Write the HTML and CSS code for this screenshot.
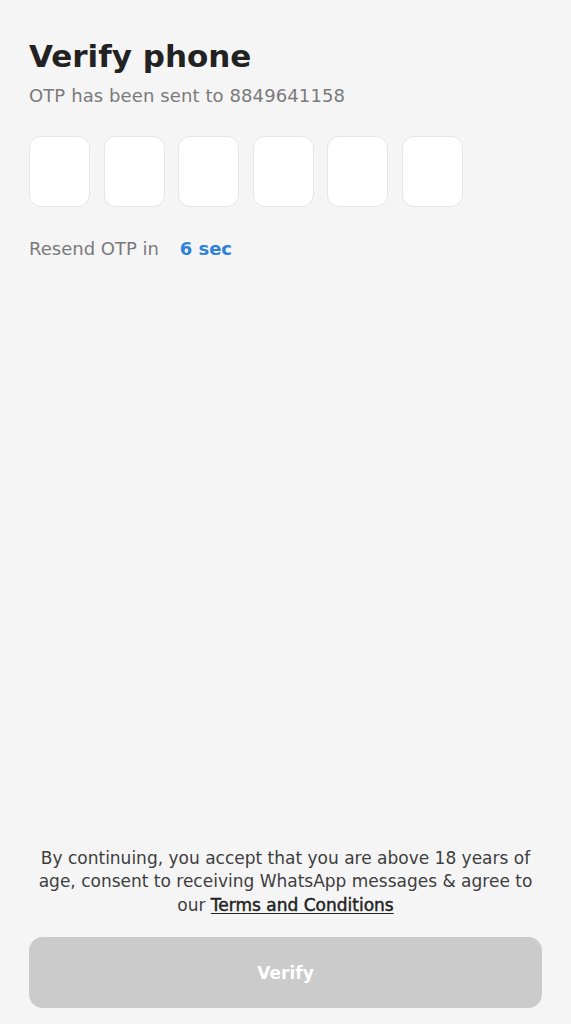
FILE: index.html
```html
<!DOCTYPE html>
<html lang="en">
<head>
<meta charset="utf-8">
<title>Verify phone</title>
<link rel="stylesheet" href="styles.css">
</head>
<body>
<main class="screen">
  <section class="top">
    <h1 class="title">Verify phone</h1>
    <p class="subtitle">OTP has been sent to 8849641158</p>
    <div class="otp">
      <div class="otp-box"></div>
      <div class="otp-box"></div>
      <div class="otp-box"></div>
      <div class="otp-box"></div>
      <div class="otp-box"></div>
      <div class="otp-box"></div>
    </div>
    <p class="resend">Resend OTP in <span class="timer">6 sec</span></p>
  </section>
  <footer class="bottom">
    <p class="legal">By continuing, you accept that you are above 18 years of age, consent to receiving WhatsApp messages &amp; agree to our <a class="terms" href="#">Terms and Conditions</a></p>
    <button class="verify" type="button">Verify</button>
  </footer>
</main>
</body>
</html>
```
FILE: styles.css
```css
html, body {
  margin: 0;
  padding: 0;
  background: #f5f5f5;
}
body {
  font-family: "DejaVu Sans", "Open Sans", sans-serif;
  color: #222;
}
.screen {
  box-sizing: border-box;
  height: 100vh;
  padding: 36px 29px 16px;
  display: flex;
  flex-direction: column;
}
.title {
  margin: 0;
  font-size: 31px;
  line-height: 40px;
  font-weight: 700;
  color: #222;
}
.subtitle {
  margin: 8px 0 0;
  font-size: 18px;
  line-height: 24px;
  letter-spacing: 0.1px;
  color: #7a7a7a;
}
.otp {
  display: flex;
  gap: 13.5px;
  margin-top: 28px;
}
.otp-box {
  box-sizing: border-box;
  width: 61px;
  height: 71px;
  background: #fff;
  border: 1px solid #e6e6e6;
  border-radius: 12px;
}
.resend {
  margin: 30px 0 0;
  font-size: 18px;
  line-height: 24px;
  color: #7a7a7a;
}
.timer {
  margin-left: 15px;
  color: #2f7fdc;
  font-weight: 700;
}
.bottom {
  margin-top: auto;
}
.legal {
  margin: 0;
  text-align: center;
  font-size: 17px;
  line-height: 23.5px;
  color: #3e3e3e;
}
.terms {
  color: #222;
  font-weight: 400;
  -webkit-text-stroke: 0.45px #222;
  text-decoration: underline;
  text-underline-offset: 2px;
}
.verify {
  display: block;
  width: 100%;
  height: 71px;
  margin-top: 20px;
  border: 0;
  border-radius: 14px;
  background: #cbcbcb;
  color: #fff;
  font-family: inherit;
  font-size: 17px;
  font-weight: 700;
}
```
